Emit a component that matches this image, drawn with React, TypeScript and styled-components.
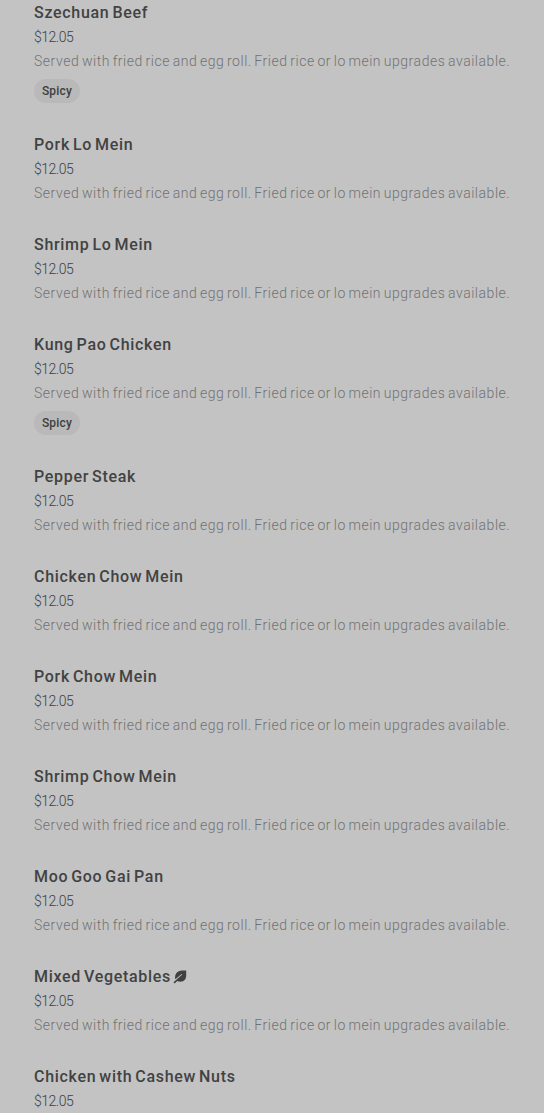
import styled, { createGlobalStyle } from "styled-components";

const GlobalStyle = createGlobalStyle`
    * {
        box-sizing: border-box;
    }
    html, body {
        margin: 0;
        background: #c3c3c3;
        overflow: hidden;
    }
    body {
        height: 1113px;
        font-family: Roboto, "Liberation Sans", sans-serif;
    }
`;
const Menu = styled.ul`
    height: 1113px;
    margin: 0;
    padding: 0 34px;
    list-style: none;
    overflow: hidden;
`;
const MenuItem = styled.li`
    padding-bottom: 27px;
`;
const Title = styled.h3`
    display: flex;
    align-items: center;
    gap: 2px;
    height: 25px;
    margin: 0;
    color: #424242;
    font-size: 16px;
    font-weight: 500;
    line-height: 25px;
    letter-spacing: 0.7px;
    word-spacing: -1.7px;
`;
const Price = styled.div`
    height: 24px;
    color: #404040;
    font-size: 14px;
    font-weight: 300;
    line-height: 25px;
    letter-spacing: -0.5px;
`;
const Description = styled.p`
    height: 24px;
    margin: 0;
    color: #727272;
    font-size: 14px;
    font-weight: 300;
    line-height: 25px;
    letter-spacing: 0.54px;
    word-spacing: -1.3px;
    white-space: nowrap;
`;
const Tag = styled.div`
    width: 46px;
    height: 24px;
    margin: 6px 0 2px;
    border-radius: 12px;
    background: #b9b9b9;
    color: #404040;
    font-size: 12px;
    font-weight: 500;
    line-height: 24px;
    letter-spacing: 0.2px;
    text-align: center;
`;
const Leaf = styled.svg`
    width: 14px;
    height: 14px;
    fill: #404040;
`;

interface IItem {
    name: string;
    description?: string;
    spicy?: boolean;
    vegetarian?: boolean;
}

const description =
    "Served with fried rice and egg roll. Fried rice or lo mein upgrades available.";

const items: IItem[] = [
    { name: "Szechuan Beef", description, spicy: true },
    { name: "Pork Lo Mein", description },
    { name: "Shrimp Lo Mein", description },
    { name: "Kung Pao Chicken", description, spicy: true },
    { name: "Pepper Steak", description },
    { name: "Chicken Chow Mein", description },
    { name: "Pork Chow Mein", description },
    { name: "Shrimp Chow Mein", description },
    { name: "Moo Goo Gai Pan", description },
    { name: "Mixed Vegetables", description, vegetarian: true },
    { name: "Chicken with Cashew Nuts" },
];

function LeafIcon() {
    return (
        <Leaf viewBox='0 0 14 14'>
            <path d='M13.2.4v5.2c0 3.9-2.3 6.2-5.7 6.2-1.3 0-2.4-.3-3.3-.8L1.7 13.4.5 12.2 9.3 4.5 8.7 3.9 2.3 9.2C1.3 4.3 4.3.4 9.1.4z' />
        </Leaf>
    );
}

function App() {
    return (
        <>
            <GlobalStyle />
            <Menu>
                {items.map((item) => (
                    <MenuItem key={item.name}>
                        <Title>
                            {item.name}
                            {item.vegetarian && <LeafIcon />}
                        </Title>
                        <Price>$12.05</Price>
                        {item.description && (
                            <Description>{item.description}</Description>
                        )}
                        {item.spicy && <Tag>Spicy</Tag>}
                    </MenuItem>
                ))}
            </Menu>
        </>
    );
}
export default App;
